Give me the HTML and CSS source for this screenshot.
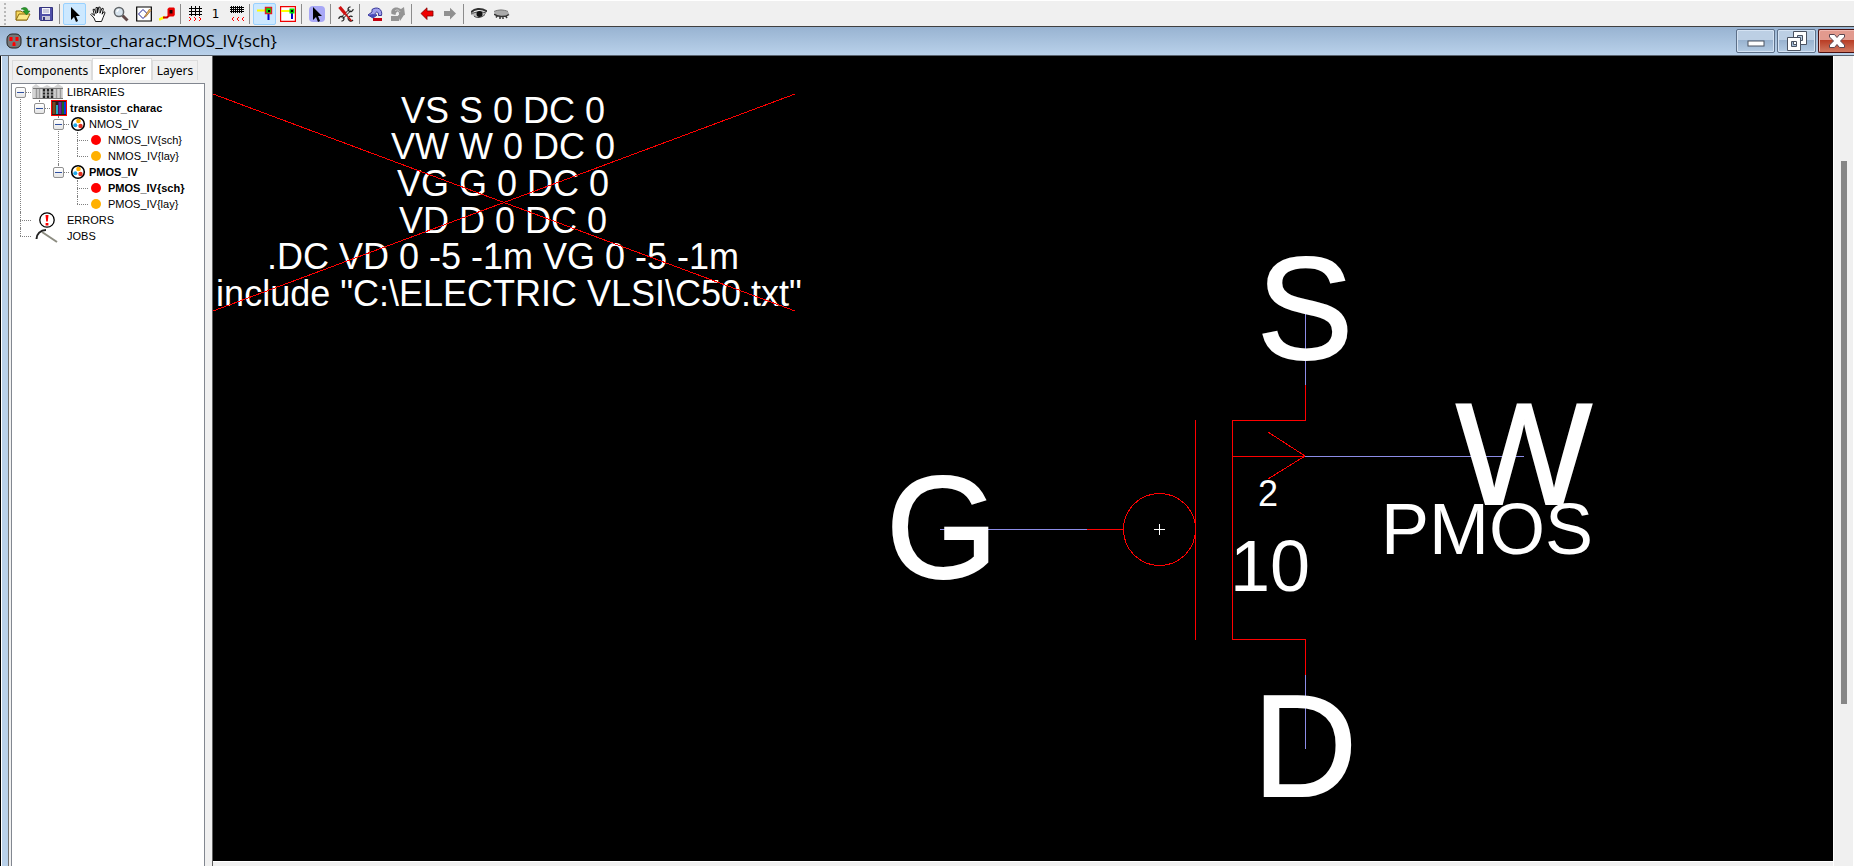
FILE: index.html
```
<!DOCTYPE html>
<html lang="en">
<head>
<meta charset="utf-8">
<title>transistor_charac:PMOS_IV{sch}</title>
<link rel="stylesheet" href="styles.css">
</head>
<body>
<svg width="0" height="0" class="defs" aria-hidden="true">
  <symbol id="cell" viewBox="0 0 16 16"><circle cx="8" cy="8" r="6.3" fill="#fff" stroke="#000" stroke-width="1.6"/><circle cx="8.5" cy="5" r="2.3" fill="#ffb000"/><circle cx="5.3" cy="9.2" r="2" fill="#20a8e8"/><circle cx="10.5" cy="10" r="2.2" fill="#e03020"/></symbol>
  <symbol id="arrow" viewBox="0 0 16 16"><path d="M4 1v13l3-3 2 5 2-1-2-5h4z" fill="#000"/></symbol>
</svg>

<div class="toolbar" role="toolbar" aria-label="Tools">
  <span class="grip"></span>
  <button class="tool" aria-label="Open"><svg viewBox="0 0 16 16"><path d="M1 5h5l1 1h5v8H1z" fill="#f6d75a" stroke="#8a6a10"/><path d="M1 14l3-6h11l-3 6z" fill="#fbe98a" stroke="#8a6a10"/><path d="M6 3c4-3 7-1 7 2h2l-3.500 4L8 5h2c0-1-2-2-4-2z" fill="#2a9a2a" stroke="#14641a" stroke-width=".5"/></svg></button>
  <button class="tool" aria-label="Save"><svg viewBox="0 0 16 16"><path d="M1.500 1.500h13v13h-12l-1-1z" fill="#5050a8" stroke="#34347e"/><path d="M4 2h8v6H4z" fill="#f4f4fa"/><path d="M5 4h6M5 6h6" stroke="#a0a0c0"/><path d="M4 10h8v4H4z" fill="#c8c8d8"/><path d="M5 11h2v3H5z" fill="#34347e"/></svg></button>
  <span class="sep"></span>
  <button class="tool on" aria-label="Select"><svg viewBox="0 0 16 16"><use href="#arrow"/></svg></button>
  <button class="tool" aria-label="Pan"><svg viewBox="0 0 16 16"><path d="M5.500 15.500L4 12 .8 8.500l1-1 2.700 2-1.500-6 1.400-.4 1.600 4.500V1.500h1.500V7L8.800 1l1.400.2-.2 6 2-5 1.400.5-1.300 5.500 1.800-2.500 1.200.8-2 5-1.600 4z" fill="#fff" stroke="#000" stroke-width=".9"/></svg></button>
  <button class="tool" aria-label="Zoom"><svg viewBox="0 0 16 16"><path d="M9.500 9.500l5 5" stroke="#604848" stroke-width="3"/><circle cx="6" cy="6" r="4.600" fill="#d8e4ee" stroke="#606468" stroke-width="1.500"/><path d="M4 6a2.500 2.500 0 0 1 2-2.500" stroke="#fff" fill="none" stroke-width="1.300"/></svg></button>
  <button class="tool" aria-label="Area"><svg viewBox="0 0 16 16"><path d="M.7 1h14.600v14H.7z" fill="#fff" stroke="#000" stroke-width="1.200"/><path d="M2.500 8l4.500-4.500L11.500 8 7 12.500z" fill="#fff" stroke="#202090"/><path d="M8.500 10.500l5-7.500 1.500 1.500-5.500 6.500z" fill="#e8b860" stroke="#905820" stroke-width=".6"/></svg></button>
  <button class="tool" aria-label="Outline"><svg viewBox="0 0 16 16"><path d="M0 13.500l6-2.500" stroke="#ff0" stroke-width="2.500"/><path d="M4 11.500h4l2-2" stroke="#d00000" stroke-width="2" fill="none"/><path d="M8.500 3l1.500-1.500h5l.8 1V9l-1.300 1.500h-5L8.500 9z" fill="#e80000"/><path d="M10.500 4h3v3.500h-3z" fill="#200000"/></svg></button>
  <span class="sep"></span>
  <button class="tool slim" aria-label="Finer grid"><svg viewBox="0 0 16 16" shape-rendering="crispEdges"><path d="M2 2.500h13M2 5.500h13M2 8.500h13M4.500 0v10M8.500 0v10M12.500 0v10" stroke="#000" fill="none"/><path d="M2 11l2 2-2 2M7 11l2 2-2 2M12 11l2 2-2 2" stroke="#f00" fill="none"/></svg></button>
  <button class="tool slim one">1</button>
  <button class="tool slim" aria-label="Coarser grid"><svg viewBox="0 0 16 16" shape-rendering="crispEdges"><path d="M1 1.500h14M1 3.500h14M1 5.500h14M2.500 0v7M4.500 0v7M6.500 0v7M8.500 0v7M10.500 0v7M12.500 0v7" stroke="#000" fill="none"/><path d="M5 11l-2 2 2 2M10 11l-2 2 2 2M15 11l-2 2 2 2" stroke="#f00" fill="none"/></svg></button>
  <span class="sep"></span>
  <button class="tool on" aria-label="Select objects"><svg viewBox="0 0 16 16"><path d="M0 4.500h8" stroke="#ff0" stroke-width="2"/><path d="M11.500 6v8" stroke="#00c" stroke-width="2"/><path d="M8.500 1.500h6v6h-6z" fill="#0d0" stroke="#e02020" stroke-width="1.400"/><path d="M11 4h2v2h-2z"/></svg></button>
  <button class="tool" aria-label="Select area"><svg viewBox="0 0 16 16"><path d="M.6.600h14.800v14.800H.6z" fill="#fff" stroke="#e00" stroke-width="1.200"/><path d="M1 5h9" stroke="#ff0" stroke-width="2"/><path d="M12 7v6" stroke="#00c" stroke-width="2"/><path d="M9.500 2.500h5v5h-5z" fill="#0d0"/><path d="M11 4h2v2h-2z"/></svg></button>
  <span class="sep"></span>
  <button class="tool" aria-label="Special select"><svg viewBox="0 0 16 16"><rect width="16" height="16" rx="4" fill="#a8a8f6"/><use href="#arrow"/></svg></button>
  <span class="sep"></span>
  <button class="tool" aria-label="Preferences"><svg viewBox="0 0 16 16"><path d="M4 12l8-8" stroke="#222" stroke-width="3"/><path d="M4 12l8-8" stroke="#eee" stroke-width="1.400"/><path d="M12.500.8c-3 .2-3 3-1.500 4.200s4 .5 4.200-2M3.500 15.200c3-.2 3-3 1.500-4.200s-4-.5-4.200 2M10 12c0 3 3 4 5 2M14.500 11c-1-1.500-3-1-3.500 0" stroke="#222" fill="none" stroke-width="1.200"/><path d="M1.500 1l6 7" stroke="#d01010" stroke-width="3.200"/><path d="M7.500 8l6 7" stroke="#c01010" stroke-width="1.800"/></svg></button>
  <span class="sep"></span>
  <button class="tool" aria-label="Undo"><svg viewBox="0 0 16 16"><path d="M14.500 9.500C16 3 10 0 5 3.500V6L1 9l5 3 4-3H8c0-4 4-4 3.500.5z" fill="#a0a0ec" stroke="#28288c" stroke-width=".9"/><path d="M1 9l5 3 4-3-4-1z" fill="#4848b8"/><path d="M6 12h9v3H6z" fill="#c00010"/></svg></button>
  <button class="tool" aria-label="Redo"><svg viewBox="0 0 16 16"><path d="M1.500 8C0 2 6-.5 11 3l3-2 1 8-6 1V8c0-4-3-3-3.500 1zM1 10h8v5H1zM8 9h6l-4 6z" fill="#949494"/><path d="M5 5c2-2 4-1 5 1" stroke="#ccc" fill="none"/></svg></button>
  <span class="sep"></span>
  <button class="tool" aria-label="Back"><svg viewBox="0 0 16 16"><path d="M2 7.500l6-5.700V5h6v5H8v3.500z" fill="#f00000" stroke="#800000" stroke-width=".8"/></svg></button>
  <button class="tool" aria-label="Forward"><svg viewBox="0 0 16 16"><path d="M14 7.500L8 1.800V5H2v5h6v3.500z" fill="#909090"/></svg></button>
  <span class="sep"></span>
  <button class="tool" aria-label="Show"><svg viewBox="0 0 16 16"><path d="M0 6.500c3-4 10-5 16-1" stroke="#333" stroke-width="2" fill="none"/><path d="M0 8.500c3-3 10-4 15-1.500-3 5-9 6-13 2.500z" fill="#bbb"/><path d="M0 8c4-2 9-3 15-1M3 10c3 2.500 7 2 11-1.500" stroke="#444" fill="none"/><circle cx="8.500" cy="8" r="3" fill="#111"/></svg></button>
  <button class="tool" aria-label="Hide"><svg viewBox="0 0 16 16"><path d="M0 6c3-3 12-3 15 1 0 4-10 5-14 1z" fill="#aaa"/><path d="M0 5.500c4-2 10-2 14 0" stroke="#777" fill="none"/><path d="M0 8c3 3 11 3.500 15 .5M3 10l-1 1.500M6 11v2M9 11v2M12 10.500l1 1.500" stroke="#333" stroke-width="1.500" fill="none"/></svg></button>
</div>

<header class="titlebar">
  <svg class="app-icon" viewBox="0 0 16 16"><rect x="1" y="1" width="14" height="14" rx="5" fill="#777" stroke="#222"/><path d="M3.500 4h3v4h-3zM9.500 4h3v4h-3zM6.500 10.500a1.500 1.500 0 0 1 3 0v2.500h-3z" fill="#f00"/></svg>
  <h1>transistor_charac:PMOS_IV{sch}</h1>
  <div class="controls">
    <button class="win" aria-label="Minimize"><svg viewBox="0 0 24 20"><rect x="4" y="10" width="16" height="5" fill="#fff" stroke="#4a5260"/></svg></button>
    <button class="win" aria-label="Restore"><svg viewBox="0 0 24 20"><path fill-rule="evenodd" d="M8.500.500h13v13h-13zM12.500 4.500v5h5v-5z" fill="#fff" stroke="#4a5260"/><path fill-rule="evenodd" d="M2.500 6.500h13v13h-13zM6.500 10.500v5h5v-5z" fill="#fff" stroke="#4a5260"/></svg></button>
    <button class="win close" aria-label="Close"><svg viewBox="0 0 24 20"><path d="M4.500 3.500h5l2.500 3 2.500-3h5v2.500l-4 4 4 4v2.500h-5l-2.500-3-2.500 3h-5V14l4-4-4-4z" fill="#fff" stroke="#5a4650"/></svg></button>
  </div>
</header>

<main class="workspace">
  <aside class="side">
    <div class="tabs" role="tablist">
      <button class="tab" role="tab">Components</button>
      <button class="tab active" role="tab" aria-selected="true">Explorer</button>
      <button class="tab" role="tab">Layers</button>
    </div>
    <div class="tree">
      <ul class="root">
        <li>
          <div class="row"><button class="toggle" aria-label="Collapse"></button>
            <svg class="icon wide" viewBox="0 0 32 16"><path d="M0 3l4-3 4 3h3l4-2 4 2h3l4-3 5 3v12H0z" fill="#d4d4d4"/><path d="M1 4.500h30M1 14.500h30" stroke="#777"/><path d="M4.500 5v9M7.500 5v9M24.500 5v9M28.500 5v9" stroke="#999" stroke-width="1.500"/><path d="M12 5v9M16 5v9M20 5v9" stroke="#222" stroke-width="2.500"/><path d="M10 8h13M10 11h13" stroke="#bbb"/></svg><span>LIBRARIES</span></div>
          <ul>
            <li>
              <div class="row strong"><button class="toggle" aria-label="Collapse"></button>
                <svg class="icon" viewBox="0 0 16 16"><path d="M0 0h16v16H0z" fill="#f00"/><path d="M1 1h14v14H1z" fill="#301818"/><path d="M3 2v12" stroke="#7a4a20" stroke-width="3"/><path d="M6 5v9" stroke="#20b0c0" stroke-width="2"/><path d="M9 2v12" stroke="#6a20a0" stroke-width="3"/><path d="M12 2v12" stroke="#108030" stroke-width="1.500"/><path d="M14 2v12" stroke="#1030e0" stroke-width="2"/></svg><span>transistor_charac</span></div>
              <ul>
                <li>
                  <div class="row"><button class="toggle" aria-label="Collapse"></button><svg class="icon"><use href="#cell"/></svg><span>NMOS_IV</span></div>
                  <ul>
                    <li><div class="row leaf"><i class="icon dot red"></i><span>NMOS_IV{sch}</span></div></li>
                    <li><div class="row leaf"><i class="icon dot"></i><span>NMOS_IV{lay}</span></div></li>
                  </ul>
                </li>
                <li>
                  <div class="row strong"><button class="toggle" aria-label="Collapse"></button><svg class="icon"><use href="#cell"/></svg><span>PMOS_IV</span></div>
                  <ul>
                    <li><div class="row leaf strong"><i class="icon dot red"></i><span>PMOS_IV{sch}</span></div></li>
                    <li><div class="row leaf"><i class="icon dot"></i><span>PMOS_IV{lay}</span></div></li>
                  </ul>
                </li>
              </ul>
            </li>
          </ul>
        </li>
        <li><div class="row leaf"><svg class="icon wide" viewBox="0 0 32 16"><circle cx="15" cy="8" r="7.200" fill="#fff" stroke="#000" stroke-width="1.300"/><path d="M13.500 3h3l-.7 6.500h-1.600zM13.600 11h2.800v2.500h-2.800z" fill="#f00"/></svg><span>ERRORS</span></div></li>
        <li><div class="row leaf"><svg class="icon wide" viewBox="0 0 32 16"><path d="M10 4l15 10" stroke="#8c8c80" stroke-width="2"/><path d="M4.500 11c0-5 4-9 9.500-9" stroke="#222" stroke-width="2" fill="none"/></svg><span>JOBS</span></div></li>
      </ul>
    </div>
  </aside>

  <section class="canvas" aria-label="Schematic">
    <svg class="schematic" viewBox="0 0 1619 805" preserveAspectRatio="xMinYMin meet">
      <g transform="translate(-213 -56)">
        <g class="wire">
          <path d="M940 529.500H1087M1305 456.500H1524M1305.500 312V385M1305.500 675V749"/>
        </g>
        <g class="label large">
          <text x="1305" y="359">S</text>
          <text x="1524" y="504">W</text>
          <text x="942" y="578">G</text>
          <text x="1305" y="796">D</text>
        </g>
        <g class="label medium">
          <text x="1487" y="554">PMOS</text>
          <text x="1270" y="591">10</text>
        </g>
        <g class="label small">
          <text x="1268" y="506">2</text>
          <text x="503" y="123">VS S 0 DC 0</text>
          <text x="503" y="159">VW W 0 DC 0</text>
          <text x="503" y="196">VG G 0 DC 0</text>
          <text x="503" y="233">VD D 0 DC 0</text>
          <text x="503" y="269">.DC VD 0 -5 -1m VG 0 -5 -1m</text>
          <text x="509" y="306">include "C:\ELECTRIC VLSI\C50.txt"</text>
        </g>
        <g class="device">
          <path d="M213 94L795 311M213 311L795 94"/>
          <path d="M1087 529.500H1123M1195.500 420V640M1305.500 385V420.500H1232.500V639.500H1305.500V675M1232 456.500H1305M1268 432L1305 456L1268 479"/>
          <circle cx="1159.500" cy="529.500" r="36"/>
        </g>
        <path class="mark" d="M1154 529.500H1165M1159.500 524V535"/>
      </g>
    </svg>
  </section>

  <div class="scrollbar"><span class="thumb"></span></div>
</main>
</body>
</html>
```
FILE: styles.css
```
* { box-sizing: border-box; }
body {
  margin: 0;
  height: 100vh;
  display: flex;
  flex-direction: column;
  overflow: hidden;
  background: #f0f0f0;
  color: #000;
  font-family: "Liberation Sans", Arial, sans-serif;
}
button { margin: 0; padding: 0; border: 0; background: none; color: inherit; font: inherit; }
ul { margin: 0; padding: 0; list-style: none; }
.defs { position: absolute; }

.toolbar {
  display: flex;
  align-items: center;
  height: 27px;
  flex: none;
  border-top: 1px solid #fff;
  border-bottom: 1px solid #404040;
}
.grip { width: 2px; height: 22px; margin: 0 5px 0 4px; border-left: 2px dotted #b8b8b8; }
.tool { display: flex; align-items: center; justify-content: center; width: 23px; height: 22px; }
.tool.slim { width: 21px; }
.tool svg { width: 16px; height: 16px; }
.tool.on { background: #cce8ff; border: 1px solid #99d1ff; border-radius: 2px; }
.one { font-size: 12px; font-family: "DejaVu Sans", sans-serif; }
.sep { width: 1px; height: 20px; margin: 0 3px 0 2px; background: #8c8c8c; }

.titlebar {
  display: flex;
  align-items: center;
  flex: none;
  height: 29px;
  padding-left: 6px;
  background: linear-gradient(#98b3d1, #b9d1ea);
  border-bottom: 1px solid #5a6470;
}
.app-icon { width: 16px; height: 16px; }
h1 { margin: 0 auto 0 4px; font: 17px/24px "Open Sans", sans-serif; }
.controls { display: flex; gap: 2px; }
.win {
  display: flex;
  align-items: center;
  justify-content: center;
  width: 39px;
  height: 24px;
  border: 1px solid #5c6f88;
  border-radius: 2px;
  box-shadow: inset 0 0 0 1px #d5e3f3;
  background: linear-gradient(#bccfe4 45%, #98b2cf 46%, #b4cbe3);
}
.win svg { width: 24px; height: 20px; }
.close {
  width: 36px;
  border-color: #4a1010;
  border-right: 0;
  border-radius: 2px 0 0 2px;
  box-shadow: inset 1px 1px 0 #f0b8b0;
  background: linear-gradient(#e29a8e 45%, #b83c24 46%, #d07860);
}

.workspace { flex: 1; min-height: 0; display: grid; grid-template-columns: 213px 1fr 21px; }
.side {
  display: flex;
  flex-direction: column;
  min-height: 0;
  padding: 2px 7px 0 2px;
  border-right: 1px solid #606060;
  border-left: 9px solid;
  border-image: linear-gradient(90deg, #000 1px, #fff 1px 2px, #b9d1ea 2px 8px, #707070 8px 9px, #f0f0f0 9px 212px, #606060 212px) 0 1 0 9;
}
.tabs { display: flex; align-items: flex-end; height: 25px; padding: 0 0 3px 1px; }
.tab {
  height: 20px;
  width: 80px;
  border: 1px solid #dcdcdc;
  border-bottom: 0;
  font: 12px/18px "Noto Sans", sans-serif;
}
.tab.active { width: 60px; height: 22px; background: #fff; }
.tab:last-child { width: 46px; }
.tree { flex: 1; border: 1px solid #828790; border-bottom: 0; background: #fff; }

.root { padding-left: 3px; }
.root ul { padding-left: 19px; }
.root li { position: relative; }
.root li::before {
  content: "";
  position: absolute;
  left: 5px;
  top: 0;
  bottom: 0;
  border-left: 1px dotted #808080;
}
.root li:last-child::before { bottom: auto; height: 8px; }
.root > li:first-child::before { top: 8px; }
.row {
  display: flex;
  align-items: center;
  height: 16px;
  font-size: 11px;
  line-height: 16px;
  white-space: nowrap;
  position: relative;
}
.row::before { content: ""; position: absolute; left: 5px; width: 11px; top: 8px; border-top: 1px dotted #808080; }
.leaf { padding-left: 17px; }
.strong { font-weight: bold; }
.toggle {
  position: relative;
  width: 11px;
  height: 11px;
  margin-right: 6px;
  border: 1px solid #909090;
  border-radius: 2px;
  background: linear-gradient(#fff, #e4e4e4);
}
.toggle::before { content: ""; position: absolute; left: 1px; right: 1px; top: 4px; height: 1px; background: #3050a0; }
.icon { width: 16px; height: 16px; margin-right: 3px; flex: none; }
.icon.wide { width: 32px; }
.dot::before { content: ""; display: block; width: 10px; height: 10px; margin: 3px 2px; border-radius: 50%; background: #ffb000; }
.dot.red::before { background: #f00; }

.canvas { background: #000; border: solid #fff; border-width: 0 0 1px; margin-bottom: 4px; min-height: 0; overflow: hidden; }
.schematic { display: block; width: 100%; height: 100%; }
.label { fill: #fff; text-anchor: middle; }
.large { font-size: 144px; stroke: #fff; stroke-width: 2px; }
.medium { font-size: 72px; }
.small { font-size: 36px; }
.wire, .device, .mark { fill: none; stroke-width: 1; shape-rendering: crispEdges; }
.wire { stroke: #8c8ce6; }
.device { stroke: #f00; }
.mark { stroke: #fff; }

.scrollbar { display: flex; justify-content: center; border-left: 1px solid #fff; border-right: 1px solid #fff; }
.thumb { width: 6px; height: 67%; margin-top: 105px; background: #868686; }
```
